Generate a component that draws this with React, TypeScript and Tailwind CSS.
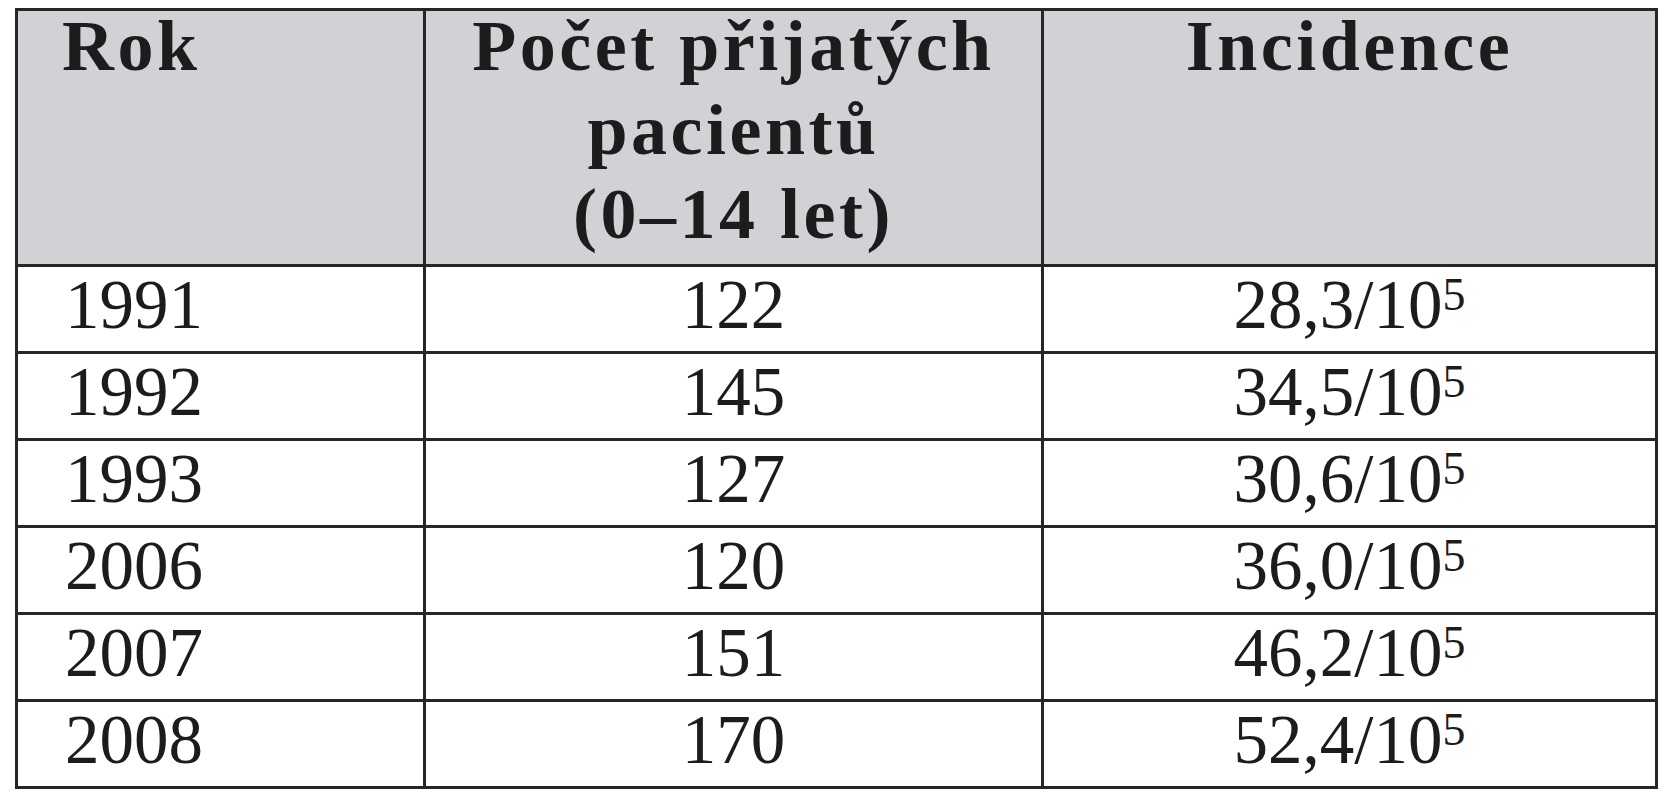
import React from "react";

const rows: [string, string, string][] = [
  ["1991", "122", "28,3/10"],
  ["1992", "145", "34,5/10"],
  ["1993", "127", "30,6/10"],
  ["2006", "120", "36,0/10"],
  ["2007", "151", "46,2/10"],
  ["2008", "170", "52,4/10"],
];

export default function App() {
  return (
    <div
      className="w-[1669px] h-[800px] bg-white pt-[8px] pl-[15px] text-[#1c1c1c]"
      style={{ fontFamily: '"Liberation Serif", "Times New Roman", serif' }}
    >
      <div className="w-[1643px] border-[3px] border-[#262626]">
        <div className="grid grid-cols-[405px_618px_614px] h-[256px] bg-[#d1d2d6] border-b-[3px] border-[#262626] font-bold text-[72px] leading-[84px] tracking-[3.5px]">
          <div className="pl-[44px]">
            <div className="-mt-[7px]">Rok</div>
          </div>
          <div className="border-l-[3px] border-[#262626] text-center">
            <div className="-mt-[7px]">
              <div>Počet přijatých</div>
              <div>pacientů</div>
              <div>(0–14 let)</div>
            </div>
          </div>
          <div className="border-l-[3px] border-[#262626] text-center">
            <div className="-mt-[7px]">Incidence</div>
          </div>
        </div>
        {rows.map((r, i) => (
          <div
            key={r[0]}
            className={
              "grid grid-cols-[405px_618px_614px] text-[69px] leading-[76px] " +
              (i < rows.length - 1 ? "h-[87px] border-b-[3px] border-[#262626]" : "h-[84px]")
            }
          >
            <div className="pl-[47px]">{r[0]}</div>
            <div className="border-l-[3px] border-[#262626] text-center">{r[1]}</div>
            <div className="border-l-[3px] border-[#262626] text-center">
              {r[2]}
              <span className="text-[46px] leading-none align-[18px]">5</span>
            </div>
          </div>
        ))}
      </div>
    </div>
  );
}
